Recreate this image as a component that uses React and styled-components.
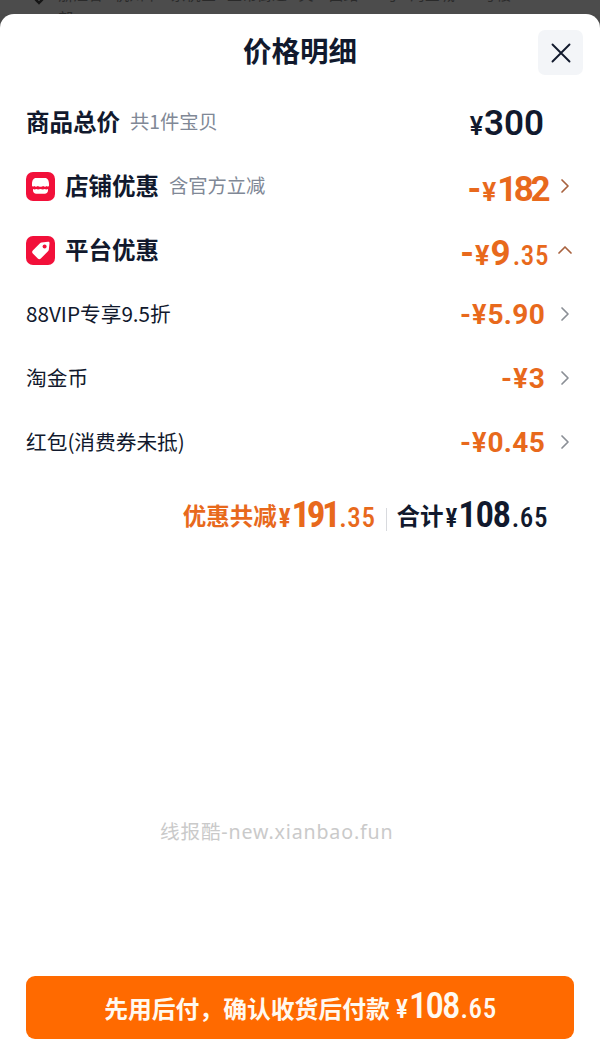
import styled, { createGlobalStyle } from 'styled-components'

const Global = createGlobalStyle`
  * { box-sizing: border-box; }
  html, body { margin: 0; padding: 0; background: #4a4a4a; }
  body { font-family: "Noto Sans CJK SC", "Noto Sans", sans-serif; }
`

const Page = styled.div`
  position: relative;
  width: 600px;
  height: 1063px;
  overflow: hidden;
  display: flex;
  flex-direction: column;
`

const Behind = styled.div`
  height: 14px;
  flex: none;
  background: #4c4c4c;
  position: relative;
  overflow: hidden;
`

const BehindPin = styled.svg`
  position: absolute;
  left: 31px;
  top: -13px;
`

const BehindText = styled.span`
  position: absolute;
  left: 58px;
  top: -14px;
  font-size: 15px;
  line-height: 16px;
  color: #2a2a2a;
  white-space: nowrap;
  word-spacing: 8px;
`

const BehindWrap = styled.span`
  position: absolute;
  left: 58px;
  top: 10px;
  font-size: 15px;
  line-height: 16px;
  color: #2a2a2a;
`

const Sheet = styled.div`
  position: relative;
  flex: 1;
  background: #fff;
  border-radius: 14px 14px 0 0;
  display: flex;
  flex-direction: column;
`

const Header = styled.div`
  position: relative;
  height: 76px;
  flex: none;
  display: flex;
  justify-content: center;
  padding-top: 15px;
`

const Title = styled.h1`
  margin: 0;
  font-size: 28.5px;
  line-height: 42px;
  font-weight: 700;
  color: #11192d;
`

const Close = styled.button`
  position: absolute;
  right: 17px;
  top: 16px;
  width: 45px;
  height: 45px;
  border: none;
  border-radius: 7px;
  background: #f3f5f8;
  padding: 0;
  display: flex;
  align-items: center;
  justify-content: center;
`

const Row = styled.div`
  height: 64px;
  flex: none;
  display: flex;
  align-items: center;
  padding: 0 26px;
`

const Badge = styled.span`
  width: 29px;
  height: 29px;
  flex: none;
  margin-right: 10px;
  border-radius: 7px;
  background: #f2103a;
  display: flex;
  align-items: center;
  justify-content: center;
`

const Label = styled.span`
  font-size: ${p => (p.$plain ? 20.7 : 23.5)}px;
  font-weight: ${p => (p.$plain ? 400 : 700)};
  color: #11192d;
  line-height: 30px;
  margin-top: -3px;
  white-space: nowrap;
`

const Note = styled.span`
  margin: -3px 0 0 10px;
  font-size: 19.3px;
  line-height: 30px;
  color: #808896;
  white-space: nowrap;
`

const Amount = styled.span`
  margin-left: auto;
  margin-right: ${p => p.$inset}px;
  padding-top: ${p => p.$drop}px;
  display: flex;
  align-items: baseline;
  font-family: Roboto, "Liberation Sans", sans-serif;
  font-stretch: 88%;
  font-weight: ${p => (p.$dark ? 600 : 700)};
  color: ${p => (p.$dark ? '#11192d' : '#e8691c')};
  white-space: nowrap;
  line-height: 40px;
`

const Sign = styled.span`
  font-size: ${p => p.$size}px;
  margin-right: 1px;
`

const Whole = styled.span`
  font-size: ${p => p.$size}px;
  letter-spacing: ${p => p.$track || 0}px;
`

const Cents = styled.span`
  font-size: ${p => p.$size}px;
  font-weight: 500;
  font-stretch: 80%;
  letter-spacing: 0.6px;
  margin-left: 2px;
`

const Slot = styled.span`
  width: 30px;
  flex: none;
  margin-right: -6px;
  display: flex;
  align-items: center;
  justify-content: center;
`

const Summary = styled.div`
  flex: none;
  height: 82px;
  padding: 4px 52px 0 0;
  display: flex;
  align-items: center;
  justify-content: flex-end;
`

const SumPart = styled.span`
  display: flex;
  align-items: baseline;
  font-family: Roboto, "Noto Sans CJK SC", sans-serif;
  font-stretch: 80%;
  font-weight: ${p => (p.$dark ? 600 : 700)};
  color: ${p => (p.$dark ? '#11192d' : '#e8691c')};
  white-space: nowrap;
  line-height: 40px;
`

const SumLabel = styled.span`
  font-family: "Noto Sans CJK SC", sans-serif;
  font-size: 23.5px;
  font-weight: 700;
  margin-right: 2px;
  transform: translateY(-2px);
`

const Divider = styled.span`
  width: 1px;
  height: 23px;
  margin: 4px 10px 0 10px;
  background: #d8dade;
`

const Spacer = styled.div`
  flex: 1;
`

const Watermark = styled.div`
  position: absolute;
  left: 160px;
  top: 819px;
  font-family: "Noto Sans", "Noto Sans CJK SC", sans-serif;
  font-size: 19.6px;
  letter-spacing: 0.85px;
  line-height: 26px;
  color: #cacaca;
  white-space: nowrap;
`

const PayButton = styled.button`
  flex: none;
  margin: 0 26px 24px;
  height: 63px;
  border: none;
  border-radius: 9px;
  background: #ff6a00;
  color: #fff9f0;
  display: flex;
  align-items: baseline;
  justify-content: center;
  padding: 10px 0 0 1px;
  font-family: "Noto Sans CJK SC", sans-serif;
  font-size: 23.8px;
  font-weight: 700;
  line-height: 40px;
`

const PayPrice = styled.span`
  display: flex;
  align-items: baseline;
  margin-left: 6px;
  font-family: Roboto, sans-serif;
  font-stretch: 75%;
  font-weight: 500;
`

const Chevron = ({ up, color = '#8b8f96' }) => (
  <svg width="14" height="16" viewBox="0 0 14 16" fill="none">
    <path
      d={up ? 'M1 11 L7 5 L13 11' : 'M4 2 L10 8 L4 14'}
      stroke={color}
      strokeWidth="1.7"
      strokeLinecap="round"
      strokeLinejoin="round"
    />
  </svg>
)

const ShopIcon = () => (
  <svg width="21" height="20" viewBox="0 0 21 20" fill="#fff">
    <path d="M6 2 H15 C17.6 2 19 4.6 19 8 V9.4 C19 10.6 17.6 11 16.8 10 C15.8 11 14.2 11 13.2 10 C12.2 11 8.8 11 7.8 10 C6.8 11 5.2 11 4.2 10 C3.4 11 2 10.6 2 9.4 V8 C2 4.6 3.4 2 6 2 Z" />
    <path d="M3 13 C4 13.6 5.4 13.6 6.2 13 C7.4 13.6 8.6 13.6 10.4 13 C12.2 13.6 13.6 13.6 14.8 13 C15.6 13.6 17 13.6 18 13 V14.5 C18 16.4 16.6 17.8 14.7 17.8 H6.3 C4.4 17.8 3 16.4 3 14.5 Z" />
  </svg>
)

const TagIcon = () => (
  <svg width="23" height="23" viewBox="0 0 23 23">
    <path
      fill="#fff"
      d="M12.5 3.5 L19 2.8 C20 2.7 20.6 3.3 20.5 4.3 L19.8 10.8 C19.7 11.4 19.5 11.8 19 12.3 L11.8 19.5 C10.9 20.4 9.7 20.4 8.8 19.5 L3.8 14.5 C2.9 13.6 2.9 12.4 3.8 11.5 L11 4.3 C11.5 3.8 11.9 3.6 12.5 3.5 Z"
    />
    <circle cx="15.6" cy="7.6" r="2" fill="#f2103a" />
  </svg>
)

const Price = ({ minus, sign, whole, size, track, cents, centsSize, dark, inset, drop }) => (
  <Amount $dark={dark} $inset={inset} $drop={drop}>
    {minus && <Sign $size={size}>-</Sign>}
    <Sign $size={sign}>¥</Sign>
    <Whole $size={size} $track={track}>{whole}</Whole>
    {cents && <Cents $size={centsSize}>{cents}</Cents>}
  </Amount>
)

const discounts = [
  { label: '88VIP专享9.5折', whole: '5.90' },
  { label: '淘金币', whole: '3' },
  { label: '红包(消费券未抵)', whole: '0.45' },
]

export default function App() {
  return (
    <Page>
      <Global />
      <Behind>
        <BehindPin width="16" height="18" viewBox="0 0 16 18" fill="none">
          <path d="M8 16 C4 12 2 10 2 7 A6 6 0 0 1 14 7 C14 10 12 12 8 16 Z" stroke="#151515" strokeWidth="2.4" />
        </BehindPin>
        <BehindText>浙江省 杭州市 余杭区 五常街道 文一西路969号 淘宝城 一号楼</BehindText>
        <BehindWrap>部</BehindWrap>
      </Behind>
      <Sheet>
        <Header>
          <Title>价格明细</Title>
          <Close aria-label="关闭">
            <svg width="22" height="22" viewBox="0 0 22 22" fill="none">
              <path d="M2.5 2.5 L19.5 19.5 M19.5 2.5 L2.5 19.5" stroke="#11192d" strokeWidth="1.9" strokeLinecap="round" />
            </svg>
          </Close>
        </Header>

        <Row>
          <Label>商品总价</Label>
          <Note>共1件宝贝</Note>
          <Price dark sign={25} whole="300" size={35} inset={6} drop={6} />
          <Slot />
        </Row>

        <Row>
          <Badge><ShopIcon /></Badge>
          <Label>店铺优惠</Label>
          <Note>含官方立减</Note>
          <Price minus sign={26} whole="182" size={35} track={-3.5} inset={3} drop={10} />
          <Slot><Chevron color="#a8623f" /></Slot>
        </Row>

        <Row>
          <Badge><TagIcon /></Badge>
          <Label>平台优惠</Label>
          <Price minus sign={27} whole="9" size={35} cents=".35" centsSize={27} inset={1} drop={10} />
          <Slot><Chevron up color="#a8623f" /></Slot>
        </Row>

        {discounts.map(item => (
          <Row key={item.label}>
            <Label $plain>{item.label}</Label>
            <Price minus sign={27} whole={item.whole} size={28} track={0.3} inset={5} drop={2} />
            <Slot><Chevron /></Slot>
          </Row>
        ))}

        <Summary>
          <SumPart>
            <SumLabel>优惠共减</SumLabel>
            <Sign $size={25}>¥</Sign>
            <Whole $size={37} $track={-3.5}>191</Whole>
            <Cents $size={27}>.35</Cents>
          </SumPart>
          <Divider />
          <SumPart $dark>
            <SumLabel>合计</SumLabel>
            <Sign $size={25}>¥</Sign>
            <Whole $size={37} $track={-1.5}>108</Whole>
            <Cents $size={27}>.65</Cents>
          </SumPart>
        </Summary>

        <Spacer />

        <PayButton>
          先用后付，确认收货后付款
          <PayPrice>
            <Sign $size={26}>¥</Sign>
            <Whole $size={37} $track={-2}>108</Whole>
            <Cents $size={27}>.65</Cents>
          </PayPrice>
        </PayButton>
      </Sheet>
      <Watermark>线报酷-new.xianbao.fun</Watermark>
    </Page>
  )
}
